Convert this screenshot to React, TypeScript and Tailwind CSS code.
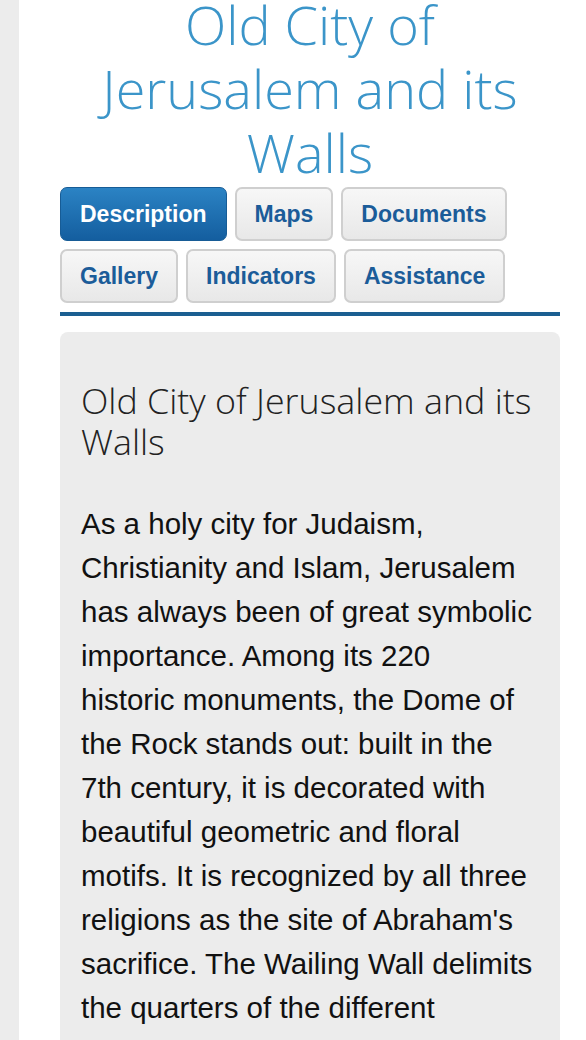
import React from "react";

const tabsRow = [
  { label: "Description", active: true },
  { label: "Maps" },
  { label: "Documents" },
  { label: "Gallery" },
  { label: "Indicators" },
  { label: "Assistance" },
];

const bodyLines = [
  "As a holy city for Judaism,",
  "Christianity and Islam, Jerusalem",
  "has always been of great symbolic",
  "importance. Among its 220",
  "historic monuments, the Dome of",
  "the Rock stands out: built in the",
  "7th century, it is decorated with",
  "beautiful geometric and floral",
  "motifs. It is recognized by all three",
  "religions as the site of Abraham's",
  "sacrifice. The Wailing Wall delimits",
  "the quarters of the different",
];

function Tab({ label, active }: { label: string; active?: boolean }) {
  return (
    <button
      className={
        active
          ? "h-[54px] px-[19px] rounded-[7px] border border-[#175c96] bg-gradient-to-b from-[#2b83c4] to-[#145e9f] text-white text-[23px] font-bold leading-none"
          : "h-[54px] px-[18px] rounded-[7px] border-2 border-[#cfcfcf] bg-gradient-to-b from-[#f7f7f7] to-[#e8e8e8] text-[#1b5c99] text-[23px] font-bold leading-none"
      }
      style={{ fontFamily: '"Liberation Sans", Arial, sans-serif' }}
    >
      {label}
    </button>
  );
}

export default function App() {
  return (
    <div className="flex min-h-[1040px] h-[1040px] overflow-hidden bg-white">
      <div className="w-[19px] shrink-0 bg-[#ececec]" />
      <div className="flex-1 min-w-0 pl-[41px] pr-[26px]">
        <h1
          className="mt-[-8px] text-center text-[54px] leading-[64px] font-light text-[#3b95c9]"
          style={{ fontFamily: '"Open Sans", sans-serif' }}
        >
          Old City of
          <br />
          Jerusalem and its
          <br />
          Walls
        </h1>
        <div className="mt-[3px] flex flex-wrap gap-x-[8px] gap-y-[8px]">
          {tabsRow.map((t) => (
            <Tab key={t.label} label={t.label} active={t.active} />
          ))}
        </div>
        <div className="mt-[9px] h-[4px] bg-[#1b5f91]" />
        <div className="mt-[16px] rounded-t-[8px] bg-[#ececec] px-[21px] pt-[48px] pb-[40px]">
          <h2
            className="text-[35.8px] leading-[41px] font-light text-[#222]"
            style={{ fontFamily: '"Open Sans", sans-serif' }}
          >
            Old City of Jerusalem and its Walls
          </h2>
          <p
            className="mt-[40px] text-[29.5px] leading-[44px] text-[#111]"
            style={{ fontFamily: '"Liberation Sans", Arial, sans-serif' }}
          >
            {bodyLines.map((line, i) => (
              <span key={i} className="block whitespace-nowrap">
                {line}
              </span>
            ))}
          </p>
        </div>
      </div>
    </div>
  );
}
